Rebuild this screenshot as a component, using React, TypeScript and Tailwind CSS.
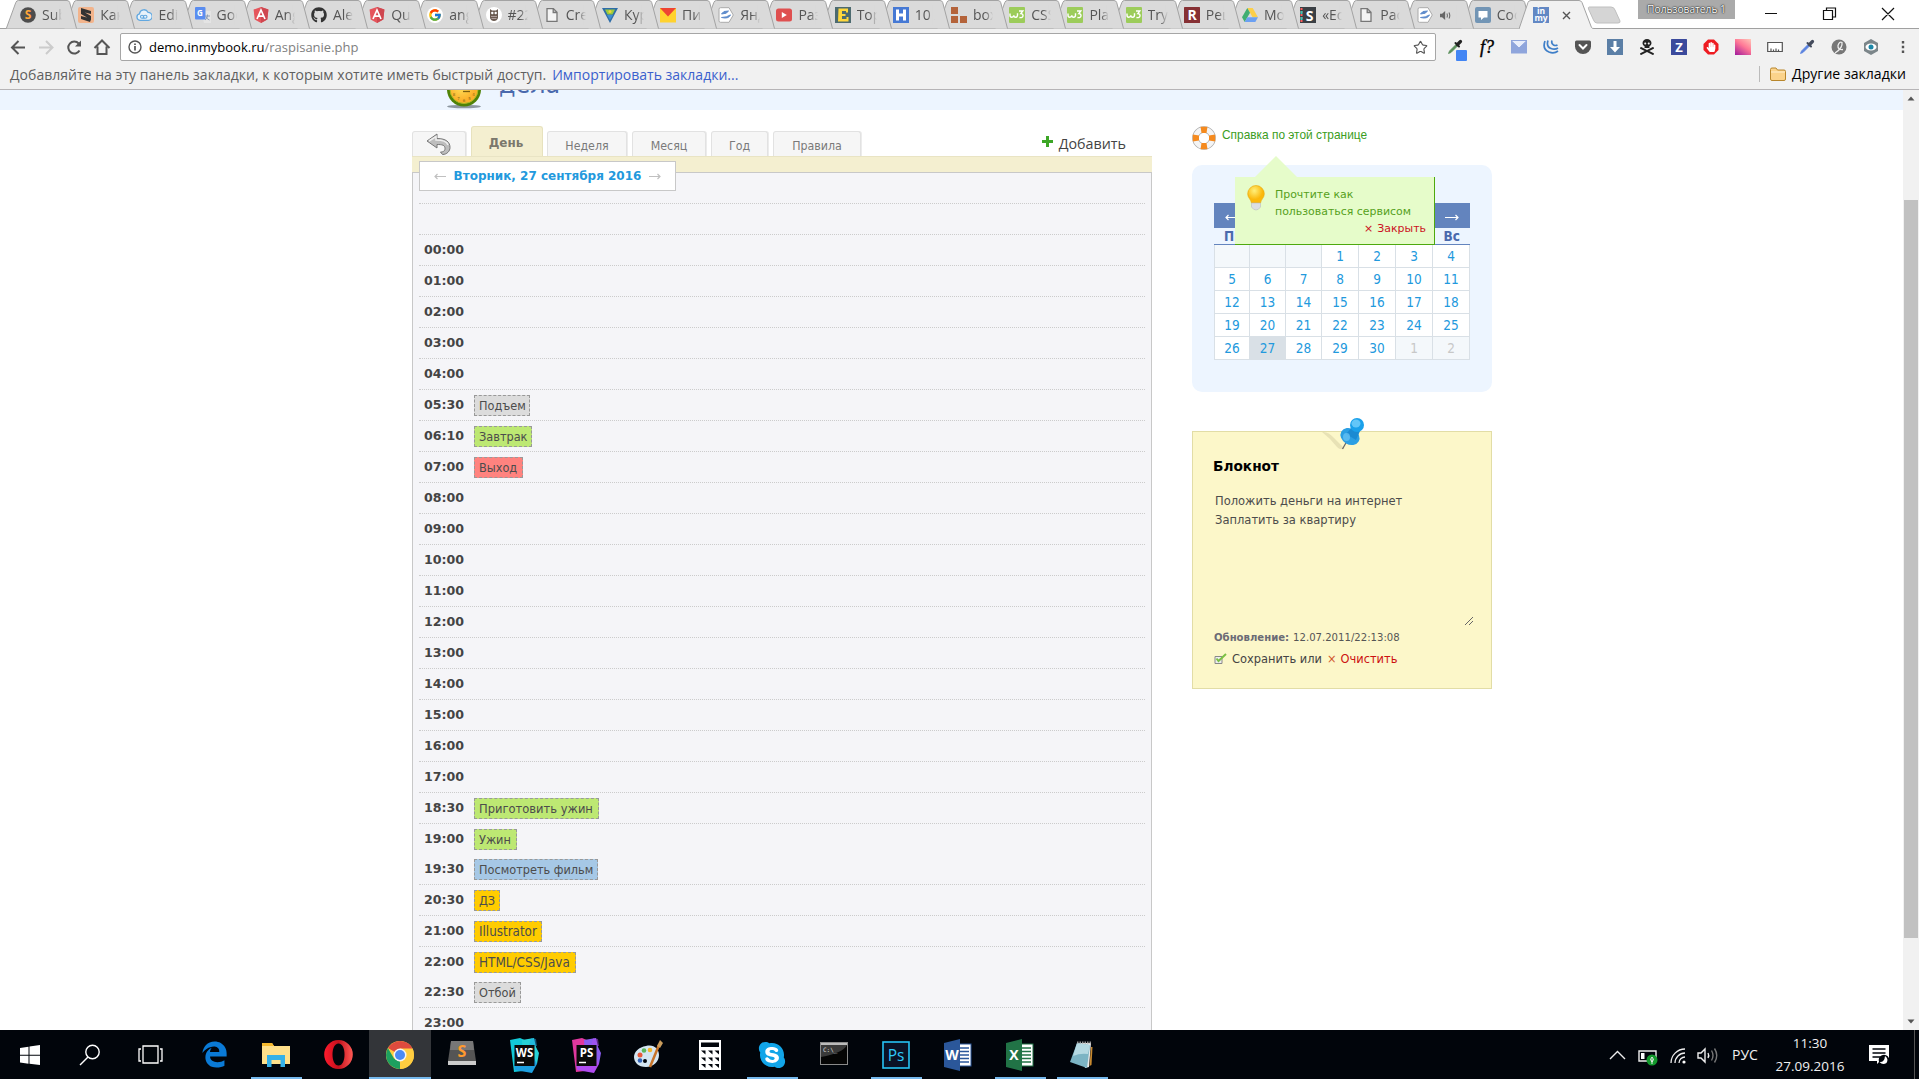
import React from "react";
import { FaGithub, FaSkype, FaHandPaper, FaSkullCrossbones } from "react-icons/fa";
import { FcGoogle } from "react-icons/fc";
import { Star } from "lucide-react";

type Kids = { children?: React.ReactNode };

const Ico = ({ children, s = 16, v = 16 }: Kids & { s?: number; v?: number }) => (
  <svg width={s} height={s} viewBox={`0 0 ${v} ${v}`} className="block shrink-0">
    {children}
  </svg>
);

const SqIcon = ({ bg, fg, t, size = 13 }: { bg: string; fg: string; t: string; size?: number }) => (
  <Ico>
    <rect width="16" height="16" fill={bg} rx="0.5" />
    <text x="8" y={8 + size * 0.36} textAnchor="middle" fontSize={size} fontWeight="bold" fill={fg} fontFamily="Open Sans, sans-serif">
      {t}
    </text>
  </Ico>
);

const Angular = () => (
  <Ico>
    <path d="M8 0l7.4 2.6-1.1 10L8 16l-6.3-3.4-1.1-10z" fill="#e5555c" />
    <path d="M8 0l7.4 2.6-1.1 10L8 16z" fill="#cf4750" />
    <path d="M4 12L8 3l4 9M5.6 9.2h4.8" stroke="#fff" strokeWidth="1.7" fill="none" />
  </Ico>
);
const PageIcon = () => (
  <Ico>
    <path d="M3 1.6h6.4L13 5.2v9.2H3zM9.2 1.8v3.7h3.6" fill="#f4f4f4" stroke="#777" strokeWidth="1.3" />
  </Ico>
);
const W3 = () => (
  <Ico>
    <rect width="16" height="16" rx="1" fill="#9ccc5a" />
    <path d="M1 6.5v1.8q0 2 1.8 2t2-2q0 2 1.8 2t1.9-2V6.3" stroke="#fff" strokeWidth="1.4" fill="none" />
    <path d="M10 4h3.8l-2 2.6q2.4.2 2.2 2.2-.4 2.4-3.6 1.7" stroke="#fff" strokeWidth="1.4" fill="none" />
  </Ico>
);
const YandexDoc = () => (
  <Ico>
    <path d="M1 2.2Q1 .7 2.5.7H11l4.3 7.3L11 15.3H2.5Q1 15.3 1 13.8z" fill="#fff" stroke="#aaa" />
    <path d="M3.5 7q1.500-3.500 7-3-1.500 3-7 3zM3.500 10.500q5 0 9-2.600-2 4.400-9 2.600z" fill="#5f8ccc" stroke="#5f8ccc" />
  </Ico>
);

const TABS: { icon: React.ReactNode; label: React.ReactNode }[] = [
  {
    label: "Subl",
    icon: (
      <Ico>
        <circle cx="8" cy="8" r="7.8" fill="#4d4d4d" />
        <text x="8" y="12.4" textAnchor="middle" fontSize="12" fontWeight="bold" fill="#ffa63a" fontFamily="Open Sans">S</text>
      </Ico>
    ),
  },
  {
    label: "Как",
    icon: (
      <Ico>
        <rect width="16" height="16" rx="2" fill="#f2b48c" />
        <path d="M3 1l10 3v3l-6-1.500L13 9v3.500L12 15 3 12V9l6 1.500L3 7z" fill="#333" />
      </Ico>
    ),
  },
  {
    label: "Edit",
    icon: (
      <Ico>
        <path d="M4 13.300a3.300 3.300 0 01-.5-6.500 4.500 4.500 0 018.500-1.500 4 4 0 01.3 8z" fill="#e8f2fa" stroke="#62a8e0" strokeWidth="1.300" />
        <path d="M4.500 9.700a1.500 1.500 0 003 0c0-2 3.500-2 3.500 0s-3.500 2-3.500 0-3-2-3 0" fill="none" stroke="#62a8e0" strokeWidth="1.100" />
      </Ico>
    ),
  },
  {
    label: "Goog",
    icon: (
      <Ico>
        <path d="M6 4h10v12H9z" fill="#e4e4e4" />
        <rect width="10.500" height="12.500" rx="1" fill="#5a8df0" />
        <text x="4.800" y="9" textAnchor="middle" fontSize="8" fontWeight="bold" fill="#fff" fontFamily="Open Sans">G</text>
        <path d="M10 9h5M12.500 7.500V9q-.5 3-2.500 4M11 9.500q1 3 3.500 3.500" stroke="#8d9db8" fill="none" />
      </Ico>
    ),
  },
  { label: "Angu", icon: <Angular /> },
  { label: "Alek", icon: <FaGithub size={16} color="#333" /> },
  { label: "Quic", icon: <Angular /> },
  {
    label: "angu",
    icon: (
      <span className="flex h-4 w-4 items-center justify-center rounded-full bg-white">
        <FcGoogle size={14} />
      </span>
    ),
  },
  {
    label: "#22",
    icon: (
      <Ico>
        <circle cx="8" cy="8" r="8" fill="#fff" />
        <path d="M4 2l2 1.500h4L12 2v9q-1 3-4 3t-4-3z" fill="#6b5b50" />
        <circle cx="6.300" cy="6" r="1.200" fill="#fff" />
        <circle cx="9.700" cy="6" r="1.200" fill="#fff" />
        <path d="M5 9.500h6M5.500 11.500h5" stroke="#cbb" strokeWidth=".7" />
      </Ico>
    ),
  },
  { label: "Crea", icon: <PageIcon /> },
  {
    label: "Курс",
    icon: (
      <Ico>
        <path d="M0 1h16L8 16z" fill="#2e6da8" />
        <path d="M3 2.500h10l-2.500 5h-5z" fill="#9bcb3c" />
        <path d="M5 8h6L8 13z" fill="#3f8fd0" />
        <circle cx="8" cy="4.500" r="1.500" fill="#f3d33c" />
      </Ico>
    ),
  },
  {
    label: "Пис",
    icon: (
      <Ico>
        <rect y="1" width="16" height="14.500" fill="#ffd22e" />
        <path d="M0 1h16L8 9.500z" fill="#ee4433" />
      </Ico>
    ),
  },
  { label: "Янд", icon: <YandexDoc /> },
  {
    label: "Раз",
    icon: (
      <Ico>
        <rect y="1.500" width="16" height="13" rx="2.500" fill="#df5050" />
        <path d="M5.800 5v6l5-3z" fill="#fff" />
      </Ico>
    ),
  },
  {
    label: "Top",
    icon: (
      <Ico>
        <rect width="16" height="16" fill="#4d6b70" />
        <path d="M3.500 1.500h9.500v4h-2v-1.500H7V7h3.500v2H7v3h4.500v-2h2v4.500H3z" fill="#ffd83c" />
      </Ico>
    ),
  },
  {
    label: "10 л",
    icon: (
      <Ico>
        <rect width="16" height="16" fill="#4679d4" />
        <path d="M4.500 2.500v11M11.500 2.500v11M4.500 8h7" stroke="#fff" strokeWidth="3" />
      </Ico>
    ),
  },
  {
    label: "box",
    icon: (
      <Ico>
        <path d="M0 0h7v7H0zM0 9h7v7H0zM9 9h7v7H9z" fill="#b4633a" />
      </Ico>
    ),
  },
  { label: "CSS", icon: <W3 /> },
  { label: "Play", icon: <W3 /> },
  { label: "Try", icon: <W3 /> },
  { label: "Рец", icon: <SqIcon bg="#863034" fg="#fff" t="R" size={14} /> },
  {
    label: "Мой",
    icon: (
      <Ico>
        <path d="M5.300 1h5.400L16 10.300h-5.400z" fill="#fccf4a" />
        <path d="M5.300 1L8 5.700 2.700 15 0 10.300z" fill="#3fae72" />
        <path d="M5.300 10.300H16L13.300 15H2.700z" fill="#6ba0f2" />
      </Ico>
    ),
  },
  {
    label: "«Ес",
    icon: (
      <Ico>
        <rect width="16" height="16" fill="#3a3f44" />
        <path d="M1.500 1v14" stroke="#ff5c5c" strokeWidth="2" strokeDasharray="2 1" />
        <path d="M1.500 4v3M1.500 10v3" stroke="#36c8b8" strokeWidth="2" />
        <text x="9.700" y="13.500" textAnchor="middle" fontSize="14" fontWeight="bold" fill="#fff" fontFamily="Open Sans">S</text>
      </Ico>
    ),
  },
  { label: "Рас", icon: <PageIcon /> },
  {
    label: (
      <span className="flex h-full items-center pl-[1px]">
        <Ico s={11} v={16}>
          <path d="M0 5.500h3L7.500 1.500v13L3 10.500H0z" fill="#666" />
          <path d="M10 5q1.500 3 0 6M13 3.500q2.500 4.500 0 9" stroke="#666" strokeWidth="1.500" fill="none" />
        </Ico>
      </span>
    ),
    icon: <YandexDoc />,
  },
  {
    label: "Соо",
    icon: (
      <Ico>
        <rect width="16" height="16" rx="2" fill="#7295b5" />
        <path d="M3.500 4h9v6.500H9L6 13v-2.500H3.500z" fill="#fff" />
      </Ico>
    ),
  },
];

const TabStrip = () => (
  <div className="relative flex h-[29px] bg-white">
    <div className="absolute inset-x-0 bottom-0 h-px bg-[#a0a0a0]" />
    <div className="flex pl-[6px]">
      {TABS.map((t, i) => (
        <div key={i} className="relative h-[29px] w-[58.19px] shrink-0" style={{ zIndex: 30 - i }}>
          <svg width="72" height="29" viewBox="0 0 72 29" className="absolute top-0 left-0">
            <path d="M.3 28.500L9.800 2.500Q10.500.5 12.500.5H61Q63 .5 63.700 2.500L71 24.500Q71.500 27 70 28.500z" fill="#dadada" />
            <path d="M.3 28.500L9.800 2.500Q10.500.5 12.500.5H61Q63 .5 63.700 2.500L70.500 28.500" fill="none" stroke="#a3a3a3" />
          </svg>
          <div className="relative flex h-full items-center pt-px pl-[14px]">
            {t.icon}
            <span className="ml-[6px] h-[20px] w-[20px] shrink-0 overflow-hidden bg-[#dadada] text-[14px] leading-[19px] whitespace-nowrap text-[#555] [mask-image:linear-gradient(to_right,black_60%,transparent)]">
              {t.label}
            </span>
          </div>
        </div>
      ))}
      <div className="relative z-40 h-[29px] w-[72px] shrink-0">
        <svg width="76" height="29" viewBox="0 0 76 29" className="absolute top-0 left-0">
          <path d="M0 29L9 2.500Q9.600.5 12 .5H60Q62 .5 63 2.500L72.500 27.500Q73 28.500 75 28.500V29z" fill="#f1f1f1" />
          <path d="M0 29L9 2.500Q9.600.5 12 .5H60Q62 .5 63 2.500L72.500 27.500Q73 28.500 75 28.500" fill="none" stroke="#a3a3a3" />
        </svg>
        <div className="relative flex h-full items-center pt-px pl-[14px]">
          <Ico>
            <rect width="16" height="16" fill="#6288c4" />
            <text x="8" y="7" textAnchor="middle" fontSize="8.500" fontWeight="bold" fill="#fff" fontFamily="Open Sans">in</text>
            <text x="8" y="13.500" textAnchor="middle" fontSize="8.500" fontWeight="bold" fill="#fff" fontFamily="Open Sans">my</text>
          </Ico>
          <svg width="9" height="9" className="ml-[13px]"><path d="M1 1l7 7M8 1L1 8" stroke="#555" strokeWidth="1.400" /></svg>
        </div>
      </div>
    </div>
    <svg width="36" height="18" className="mt-[6px] -ml-[4px] block">
      <path d="M2 1h22q3 0 4 3l5 11q.5 2-2 2H10q-2.500 0-3.500-3L1.500 3Q1 1 2 1z" fill="#d5d5d5" stroke="#bfbfbf" />
    </svg>
    <div className="mt-0 ml-auto h-[19px] w-[97px] bg-[#aaa] text-center text-[10.200px] leading-[18px] text-white [text-shadow:0_0_2px_#000,0_0_1px_#000]">
      Пользователь 1
    </div>
    <div className="flex h-[29px] w-[184px] items-start">
      <svg width="184" height="29" fill="none" stroke="#111" strokeWidth="1.200">
        <path d="M30 13.500h12M88.500 10.500h9v9h-9zM91.500 10.500v-2.500h9v9h-3M147 8l12 12M159 8l-12 12" />
      </svg>
    </div>
  </div>
);

const Dropper = ({ a, b }: { a: string; b: string }) => (
  <Ico>
    <path d="M1.500 14.500l1-2.500L9 5.500l1.500 1.500L4 13.500z" fill={b} stroke={b} strokeWidth=".8" />
    <path d="M8.500 4l3.500 3.500" stroke={a} strokeWidth="2" strokeLinecap="round" />
    <path d="M10.500 5.500L13.500 2.500" stroke={a} strokeWidth="3.200" strokeLinecap="round" />
  </Ico>
);

const EXT: React.ReactNode[] = [
  <span key="0" className="relative">
    <Dropper a="#222" b="#5b8f5b" />
    <span className="absolute top-[11px] left-[9px] h-[11px] w-[11px] rounded-[1px] bg-[#4285f4]" />
  </span>,
  <span key="1" className="font-['Liberation_Serif'] text-[18px] leading-4 text-black italic [-webkit-text-stroke:0.4px_#000]">f?</span>,
  <Ico key="2"><rect y="1.500" width="16" height="13" fill="#8fa5dc" /><path d="M0 1.500h16L8 9z" fill="#e8edfa" stroke="#8fa5dc" /></Ico>,
  <Ico key="3"><g fill="none" stroke="#3f7fc8" strokeWidth="1.700"><path d="M2 2q-3 8 4 11 5 2 9-1M5 1.500q-2 6 3 8 4 1.500 7-.5M9 1.500q-1 3 1.500 4.500 2 1 4 0" /></g></Ico>,
  <Ico key="4"><path d="M1.500 1.500h13Q16 1.500 16 3v4.500a8 7.500 0 01-16 0V3Q0 1.500 1.500 1.500z" fill="#555" /><path d="M4.500 6L8 9.500 11.500 6" stroke="#fff" strokeWidth="2" fill="none" strokeLinecap="round" /></Ico>,
  <Ico key="5"><rect width="16" height="16" fill="#5b7fa6" /><path d="M6.500 2h3v6H13l-5 5.500L3 8h3.500z" fill="#fff" /></Ico>,
  <FaSkullCrossbones key="6" size={16} color="#222" />,
  <SqIcon key="7" bg="#3b4a9c" fg="#fff" t="Z" size={13} />,
  <span key="8" className="relative flex h-4 w-4 items-center justify-center">
    <svg width="16" height="16" className="absolute inset-0"><path d="M5 .5h6L15.500 5v6L11 15.500H5L.5 11V5z" fill="#ee1c22" /></svg>
    <FaHandPaper size={10} color="#fff" className="relative" />
  </span>,
  <span key="9" className="h-4 w-4 bg-[linear-gradient(35deg,#a0189c,#ff7896_55%,#ffc8b8)]" />,
  <Ico key="10"><path d="M.7 3.500h14.600v9H.7zM4 12V9.500M6.500 12v-1.500M9 12V9.500M11.500 12v-1.500" stroke="#555" strokeWidth="1.200" fill="#fff" /></Ico>,
  <Dropper key="11" a="#444b5c" b="#5b83e0" />,
  <Ico key="12"><circle cx="8" cy="8" r="7.500" fill="#777" /><path d="M4 14Q12 9 11 3.500 8.500 2 7 6.500 6.500 11 12 10.500" stroke="#eee" strokeWidth="1.300" fill="none" /></Ico>,
  <Ico key="13"><path d="M8 0l7 4v8l-7 4-7-4V4z" fill="#7c868a" /><ellipse cx="8" cy="8" rx="5.500" ry="3.500" fill="#fff" /><circle cx="8" cy="8" r="2.500" fill="#1b87a8" /></Ico>,
  <Ico key="14"><path d="M6.800 2h2.400v2.400H6.800zM6.800 6.800h2.400v2.400H6.800zM6.800 11.600h2.400V14H6.800z" fill="#555" /></Ico>,
];

const Toolbar = () => (
  <div className="flex h-[33px] items-center bg-[#f1f1f1] pt-[3px]">
    <svg width="120" height="28" className="shrink-0" fill="none" strokeWidth="2">
      <path d="M25 14.500H12.500M18.500 8L12 14.500l6.500 6.500" stroke="#555" />
      <path d="M39 14.500h12.500M46 8l6.500 6.500-6.500 6.500" stroke="#ccc" />
      <path d="M79.500 17.500a6 6 0 11-.8-7" stroke="#555" />
      <path d="M81 7.500v6h-6z" fill="#555" />
      <path d="M94.500 15L102 7.500l7.500 7.500M97.500 13.500v7.500h9V13.500" stroke="#555" />
    </svg>
    <div className="flex h-[28px] w-[1316px] shrink-0 items-center rounded-[2px] border border-[#a6a6a6] bg-white pl-[7px]">
      <svg width="14" height="14" fill="none" stroke="#555" strokeWidth="1.400">
        <circle cx="7" cy="7" r="6" />
        <path d="M7 6v4.500M7 3.500V5" strokeWidth="1.700" />
      </svg>
      <span className="ml-[7px] pt-px text-[13px] text-black">
        demo.inmybook.ru<span className="text-[#808080]">/raspisanie.php</span>
      </span>
      <Star size={15} strokeWidth={1.800} color="#555" className="mr-[7px] ml-auto" />
    </div>
    <div className="flex pl-[3px]">
      {EXT.map((e, i) => (
        <span key={i} className="flex h-5 w-8 items-center justify-center">{e}</span>
      ))}
    </div>
  </div>
);

const Bookmarks = () => (
  <div className="flex h-[28px] items-center border-b border-[#b6b4b6] bg-[#f1f1f1] pb-[3px] pl-[10px] text-[14px] text-[#5f5f5f]">
    <span className="tracking-[0.025px]">Добавляйте на эту панель закладки, к которым хотите иметь быстрый доступ.</span>
    <span className="ml-[6px] text-[#3a5fcd]">Импортировать закладки...</span>
    <span className="ml-auto h-4 w-px bg-[#bbb]" />
    <svg width="16" height="14" className="mr-[6px] ml-[10px]">
      <path d="M.5 12V2.500Q.5 1 2 1h4l1.500 2H14q1.500 0 1.500 1.500V12q0 1.500-1.500 1.500H2Q.5 13.500.5 12z" fill="#fbd38b" stroke="#b8862c" />
      <path d="M1 5h14" stroke="#fff0cf" />
    </svg>
    <span className="mr-[13px] text-[14.080px] text-black">Другие закладки</span>
  </div>
);

const SiteHeader = () => (
  <div className="h-[20px] overflow-hidden bg-[#edf5ff] pl-[446px]">
    <div className="-mt-[20px] flex">
      <svg width="36" height="40" viewBox="0 0 36 40">
        <defs>
          <radialGradient id="clk" cx=".4" cy=".4"><stop offset="0" stopColor="#ffe25a" /><stop offset="1" stopColor="#fbb02a" /></radialGradient>
        </defs>
        <ellipse cx="18" cy="36.500" rx="17" ry="1.800" fill="#8d97a0" />
        <circle cx="18" cy="19.500" r="17" fill="#4f8207" />
        <circle cx="18" cy="19.500" r="14" fill="url(#clk)" stroke="#a9b920" strokeWidth="1" />
        <g fontSize="4" fill="#8a6c14" textAnchor="middle" fontFamily="DejaVu Sans">
          <text x="8" y="26">8</text><text x="12.500" y="29.500">7</text><text x="18" y="31.500">6</text><text x="23.500" y="29.500">5</text><text x="27.500" y="26">4</text>
        </g>
        <path d="M17 21.500h7" stroke="#7a5f10" strokeWidth="1.300" />
      </svg>
      <span className="ml-[17px] pt-px font-['DejaVu_Sans_Condensed'] text-[26.500px] leading-[26px] text-[#4a69ad]">дела</span>
    </div>
  </div>
);

const ViewTab = ({ w, children }: Kids & { w: string }) => (
  <div className={`${w} flex h-[25px] items-center justify-center rounded-t-[3px] border border-b-0 border-[#e2e2e2] bg-[#f6f6f6] pt-[4px] text-[12.300px] text-[#7a7a7a] shadow-[1px_0_0_#ececec]`}>
    {children}
  </div>
);

const LongArrow = ({ dir, w = 12, color }: { dir: "l" | "r"; w?: number; color: string }) => (
  <svg width={w} height="7" viewBox={`0 0 ${w} 7`} fill="none" stroke={color} strokeWidth="1.200" className="shrink-0">
    <path d={dir === "l" ? `M${w} 3.500H1M3.500 1L1 3.500L3.500 6` : `M0 3.500H${w - 1}M${w - 3.5} 1L${w - 1} 3.500L${w - 3.5} 6`} />
  </svg>
);

const GREY = "bg-[#dcdcdc]", GREEN = "bg-[#bde873]", RED = "bg-[#ff837f]", BLUE = "bg-[#a6c8e6]", YEL = "bg-[#ffcc00]";
type Item = [string, string?, string?, string?];
const ROWS: Item[][] = [
  [["00:00"]], [["01:00"]], [["02:00"]], [["03:00"]], [["04:00"]],
  [["05:30", "Подъем", GREY, "w-[56px] text-[12.600px]"]],
  [["06:10", "Завтрак", GREEN, "w-[58px] text-[12.600px]"]],
  [["07:00", "Выход", RED, "w-[49px] text-[12.600px]"]],
  [["08:00"]], [["09:00"]], [["10:00"]], [["11:00"]], [["12:00"]], [["13:00"]], [["14:00"]], [["15:00"]], [["16:00"]], [["17:00"]],
  [["18:30", "Приготовить ужин", GREEN, "w-[125px] text-[12.800px]"]],
  [["19:00", "Ужин", GREEN, "w-[43px] text-[12.600px]"], ["19:30", "Посмотреть фильм", BLUE, "w-[124px] text-[12.600px]"]],
  [["20:30", "ДЗ", YEL, "w-[26px] text-[12.600px]"]],
  [["21:00", "Illustrator", YEL, "w-[68px] text-[13.300px]"]],
  [["22:00", "HTML/CSS/Java", YEL, "w-[102px] text-[13.400px]"], ["22:30", "Отбой", GREY, "w-[47px] text-[12.600px]"]],
  [["23:00"]],
];

const Schedule = () => (
  <div className="ml-[412px] w-[740px] shrink-0 pt-[16px] font-['DejaVu_Sans_Condensed']">
    <div className="flex h-[30px] items-end">
      <ViewTab w="w-[54px]">
        <svg width="26" height="23" viewBox="0 0 26 23" className="-mt-[3px]">
          <path d="M1 8L11 1v4.500c9 0 13 3.500 13 9 0 3.500-3 7-7.500 7l-2-2.500c3.500 0 4.500-1.500 4.500-3.500 0-3.500-3-4-8-4V15z" fill="#bdbdbd" stroke="#777" />
          <path d="M3 8l7-4.500V7c7 0 11 1.500 12 5" fill="none" stroke="#eee" strokeWidth="1.500" />
        </svg>
      </ViewTab>
      <div className="mr-[4px] ml-[5px] flex h-[30px] w-[72px] items-center justify-center rounded-t-[3px] border border-b-0 border-[#e7e2be] bg-[#f4efd0] pt-[2px] pr-[2px] font-['DejaVu_Sans'] text-[12px] font-bold text-[#7b786c]">День</div>
      <ViewTab w="w-[80px]">Неделя</ViewTab>
      <span className="w-[5px]" />
      <ViewTab w="w-[74px]">Месяц</ViewTab>
      <span className="w-[5px]" />
      <ViewTab w="w-[57px]">Год</ViewTab>
      <span className="w-[5px]" />
      <ViewTab w="w-[88px]">Правила</ViewTab>
      <div className="mb-[2px] ml-auto flex items-center font-['Open_Sans'] text-[14.300px] leading-[20px] text-[#444]">
        <svg width="11" height="11" className="mr-[6px] -mt-[5px]"><path d="M4 0h3v4h4v3H7v4H4V7H0V4h4z" fill="#3ca626" /></svg>
        <span className="mr-[26px]">Добавить</span>
      </div>
    </div>
    <div className="h-[16px] border-t border-[#e9e4c4] bg-[#f4efd0]" />
    <div className="relative border border-b-0 border-[#c8c8c8] bg-[#f5f5f8] px-[6px]">
      <div className="absolute -top-[12px] left-[6px] flex h-[30px] w-[257px] items-center justify-center gap-[8px] border border-[#c8c8c8] bg-white font-['DejaVu_Sans'] text-[12px] font-bold whitespace-nowrap text-[#2299dd]">
        <LongArrow dir="l" color="#c0c0c0" />
        <span>Вторник, 27 сентября 2016</span>
        <LongArrow dir="r" color="#c0c0c0" />
      </div>
      <div className="h-[31px] border-b border-dotted border-[#ccc]" />
      <div className="h-[31px] border-b border-dotted border-[#ccc]" />
      {ROWS.map((row, i) => (
        <div key={i} className="border-b border-dotted border-[#ccc]">
          {row.map(([time, title, color, w]) => (
            <div key={time} className="flex h-[30px] pl-[5px]">
              <span className="mt-[5px] w-[50px] font-['DejaVu_Sans'] text-[12.600px] leading-[19px] font-bold text-[#444]">{time}</span>
              {title && (
                <span className={`${color} ${w} mt-[5px] h-[21px] border border-dashed border-[#999] pl-[4px] leading-[19px] whitespace-nowrap text-[#4c4c4c]`}>
                  {title}
                </span>
              )}
            </div>
          ))}
        </div>
      ))}
    </div>
  </div>
);

const WEEKS = [
  ["", "", "", "1", "2", "3", "4"],
  ["5", "6", "7", "8", "9", "10", "11"],
  ["12", "13", "14", "15", "16", "17", "18"],
  ["19", "20", "21", "22", "23", "24", "25"],
  ["26", "27", "28", "29", "30", "-1", "-2"],
];
const COLS = "grid grid-cols-[35px_36px_36px_37px_37px_37px_37px]";

const Calendar = () => (
  <div className="relative mt-[15px] h-[227px] rounded-[10px] bg-[#edf5ff] pt-[38px] pl-[22px] text-[13.500px]">
    <div className="w-[256px]">
      <div className="flex h-[25px] items-center justify-between bg-[#6384be] px-[11px] pt-[3px]">
        <LongArrow dir="l" w={14} color="#fff" />
        <LongArrow dir="r" w={14} color="#fff" />
      </div>
      <div className="flex h-[17px] justify-between border-b border-[#6384be] px-[10px] leading-[17px] font-bold text-[#4a69ad]">
        <span>Пн</span>
        <span>Вс</span>
      </div>
      <div className={`${COLS} border-l border-[#d9e0e6]`}>
        {WEEKS.flat().map((d, i) => {
          const off = d === "" || d[0] === "-";
          return (
            <span
              key={i}
              className={`h-[23px] border-r border-b border-[#d9e0e6] text-center leading-[22px] ${off ? "bg-[#f4f8fb] text-[#c8c8c8]" : d === "27" ? "bg-[#d9e0e6] text-[#2299dd]" : "bg-white text-[#2299dd]"}`}
            >
              {d.replace("-", "")}
            </span>
          );
        })}
      </div>
    </div>
    <div className="absolute top-[12px] left-[43px] flex h-[68px] w-[200px] border-r border-b border-[#4ea90e] bg-[#e6fcca] font-['DejaVu_Sans'] text-[10.940px] leading-[17px] text-[#55a020]">
      <svg width="44" height="22" className="absolute -top-[21px] left-[19px]"><path d="M22 0l22 22H0z" fill="#e6fcca" /></svg>
      <svg width="18" height="26" viewBox="0 0 18 26" className="mt-[8px] ml-[12px] shrink-0">
        <defs><radialGradient id="blb" cx=".4" cy=".3"><stop offset="0" stopColor="#fff07a" /><stop offset="1" stopColor="#fbb80c" /></radialGradient></defs>
        <path d="M9 .5a8.300 8.300 0 018.300 8.300c0 4-3.300 5.700-3.800 9.200h-9C4 14.500.7 12.800.7 8.800A8.300 8.300 0 019 .5z" fill="url(#blb)" stroke="#e8a80c" strokeWidth=".6" />
        <path d="M4.500 18h9v4q-2 3-4.500 3t-4.500-3z" fill="#dcdfe2" stroke="#b8bcc0" strokeWidth=".6" />
      </svg>
      <div className="mt-[9px] ml-[10px] flex-1 whitespace-nowrap">
        <div>Прочтите как</div>
        <div>пользоваться сервисом</div>
        <div className="pr-[8px] text-right text-[#cc1122]"><span className="mr-[4px]">×</span>Закрыть</div>
      </div>
    </div>
  </div>
);

const Notebook = () => (
  <div className="relative mt-[39px] h-[258px] border border-[#e2dda6] bg-[#fcf7c9] pt-[24px] pl-[20px] text-[#4c4c4c]">
    <svg width="46" height="38" viewBox="0 0 46 38" className="absolute -top-[16px] left-[127px]">
      <path d="M2 16q6-1 12 6l10 10q-3 3-7-1Q10 22 2 16z" fill="#e2dcb0" opacity=".8" />
      <path d="M22.500 33l4.500-8" stroke="#666" strokeWidth="1.300" />
      <ellipse cx="30" cy="20.500" rx="10" ry="8" transform="rotate(30 30 20.500)" fill="#2b9fe3" />
      <path d="M26 18l7-8 7 5-4 9z" fill="#1b8ad2" />
      <circle cx="37" cy="9" r="7" fill="#1aa0ea" />
      <ellipse cx="36" cy="7.500" rx="4.500" ry="4" fill="#63c6f8" />
      <ellipse cx="26.500" cy="21" rx="3.500" ry="4" fill="#6cc6f5" opacity=".7" />
    </svg>
    <div className="font-['DejaVu_Sans'] text-[13.700px] leading-[20px] font-bold text-black">Блокнот</div>
    <div className="relative mt-[15px] ml-[2px] h-[134px] w-[258px] text-[12.800px] leading-[19px]">
      Положить деньги на интернет
      <br />
      Заплатить за квартиру
      <svg width="8" height="8" className="absolute right-0 bottom-0"><path d="M0 8L8 0M4 8l4-4" stroke="#666" /></svg>
    </div>
    <div className="mt-[6px] ml-px font-['DejaVu_Sans'] text-[10.100px] leading-[14px] text-[#555]">
      <b className="text-[#6b6b75]">Обновление:</b><span className="ml-[4px]">12.07.2011/22:13:08</span>
    </div>
    <div className="mt-[4px] ml-px flex h-[20px] items-center text-[12.700px] text-[#444]">
      <svg width="13" height="12" className="mr-[5px] -mt-[1px]">
        <path d="M1 3.500h7v7H1z" fill="#eee" stroke="#888" />
        <path d="M2.500 5.500l2 2.500L12 1" stroke="#7bc043" strokeWidth="2" fill="none" />
      </svg>
      Сохранить или
      <span className="mr-[4px] ml-[5px] text-[#d0552c]">×</span>
      <span className="text-[#cc1111]">Очистить</span>
    </div>
  </div>
);

const Sidebar = () => (
  <div className="ml-[40px] w-[300px] shrink-0 pt-[16px] font-['DejaVu_Sans_Condensed']">
    <div className="flex h-[24px]">
      <svg width="24" height="24" viewBox="0 0 24 24">
        <circle cx="12" cy="12" r="8.500" fill="none" stroke="#aaa" strokeWidth="6.600" />
        <circle cx="12" cy="12" r="8.500" fill="none" stroke="#f4f4f4" strokeWidth="5.200" />
        <g fill="#f58a1e">
          <path d="M8.500 .8h7l-1 6.200h-5zM8.500 23.200h7l-1-6.200h-5zM.8 8.500v7l6.200-1v-5zM23.200 8.500v7l-6.200-1v-5z" />
        </g>
      </svg>
      <span className="ml-[6px] pt-[1px] font-['Liberation_Sans'] text-[11.900px] leading-[16px] text-[#3a9d22]">Справка по этой странице</span>
    </div>
    <Calendar />
    <Notebook />
  </div>
);

const Scrollbar = () => (
  <div className="ml-auto flex w-4 shrink-0 flex-col items-center bg-[#f1f1f1]">
    <svg width="16" height="16" className="shrink-0"><path d="M4.500 10.500h7L8 6.500z" fill="#555" /></svg>
    <div className="mt-[94px] h-[738px] w-[14px] bg-[#c1c1c1]" />
    <svg width="16" height="16" className="mt-auto shrink-0"><path d="M4.500 5.500h7L8 9.500z" fill="#555" /></svg>
  </div>
);

const JB = ({ t, a, b, c }: { t: string; a: string; b: string; c: string }) => (
  <svg width="31" height="36" viewBox="0 0 31 36">
    <path d="M1 3l10-2 7 3-4 30-9 1z" fill={a} />
    <path d="M13 3l12-2 2 9 3 6-2 11-14-4z" fill={b} />
    <path d="M5 27l19-8 4 8-5 9-17-3z" fill={c} />
    <path d="M22 1l5 1 1 7h-8z" fill={c} opacity=".5" />
    <rect x="5.500" y="8" width="20" height="21" fill="#0a0a0a" />
    <text x="15.500" y="20" textAnchor="middle" fontSize="11.500" fontWeight="bold" fill="#fff" fontFamily="Open Sans">{t}</text>
    <path d="M8 25.500h7" stroke="#fff" strokeWidth="1.500" />
  </svg>
);
const Office = ({ t, c }: { t: string; c: string }) => (
  <svg width="28" height="32" viewBox="0 0 28 32">
    <rect x="13" y="5" width="14" height="22" fill="#fff" stroke={c} />
    <path d="M16 9h9M16 12.500h9M16 16h9M16 19.500h9M16 23h9" stroke={c} strokeWidth="1.600" />
    <path d="M0 4L16 0v32L0 28z" fill={c} />
    <text x="8" y="21" textAnchor="middle" fontSize="14" fontWeight="bold" fill="#fff" fontFamily="Open Sans">{t}</text>
  </svg>
);

const APPS: [React.ReactNode, ("line" | "active")?][] = [
  [<svg width="27" height="27" viewBox="0 0 512 512"><path d="M25.714 228.163c.111-.162.23-.323.342-.485-.021.162-.045.323-.065.485h-.277zm460.572 15.508c0-44.032-7.754-84.465-28.801-122.405C416.498 47.879 343.912 8.001 258.893 8.001 118.962 7.724 40.617 113.214 26.056 227.679c42.429-61.312 117.073-121.376 220.375-124.966 0 0 109.666 0 99.419 104.957H169.997c6.369-37.386 18.554-58.986 34.339-78.926-75.048 34.900-121.850 96.096-120.742 188.315.83 71.448 50.124 144.836 120.743 171.976 83.357 31.847 192.776 7.200 240.132-21.321V363.307c-80.864 56.494-270.871 60.925-272.255-67.572h314.073v-52.064z" fill="#0a7ad6" /></svg>],
  [<svg width="28" height="28" viewBox="0 0 28 28"><path d="M0 2h10l2 3h16v18H0z" fill="#ffe08a" /><path d="M0 2h10l2 3H0z" fill="#f5b92e" /><path d="M5 14h18v12h-4.500v-7h-9v7H5z" fill="#35b1e8" /></svg>, "line"],
  [<svg width="29" height="29" viewBox="0 0 29 29"><defs><linearGradient id="op"><stop offset="0" stopColor="#ff1b2d" /><stop offset=".5" stopColor="#c4101c" /><stop offset="1" stopColor="#ff5a55" /></linearGradient></defs><path fillRule="evenodd" d="M14.500 0a14.300 14.500 0 100 29 14.300 14.500 0 000-29zm0 3.500c4 0 6 5 6 11s-2 11-6 11-6-5-6-11 2-11 6-11z" fill="url(#op)" /></svg>],
  [<svg width="28" height="28" viewBox="0 0 28 28"><circle cx="14" cy="14" r="14" fill="#ffcd40" /><path d="M14 14L1.900 7A14 14 0 0126.100 7z" fill="#dd4b3e" /><path d="M14 14v-7h12.100A14 14 0 0114 28l6-10.500z" fill="#ffcd40" /><path d="M14 7.500h12.400Q24 3 20 1.300L9 3z" fill="#dd4b3e" /><path d="M1.900 7L8 17.500 14 20.500 14 28A14 14 0 011.900 7z" fill="#1da05f" /><circle cx="14" cy="14" r="6.500" fill="#f5f5f5" /><circle cx="14" cy="14" r="5" fill="#4a8af5" /></svg>, "active"],
  [<svg width="28" height="26" viewBox="0 0 28 26" className="-mt-[3px]"><path d="M3 1h22l3 20v4H0v-4z" fill="#555" /><path d="M0 21h28v4H0z" fill="#ccc" /><path d="M3 1h22l1 9H2z" fill="#777" /><text x="14" y="17" textAnchor="middle" fontSize="16" fontWeight="bold" fill="#ff9a2e" fontFamily="Open Sans">S</text></svg>],
  [<JB t="WS" a="#12c9d8" b="#27d3d8" c="#1d9fe0" />],
  [<JB t="PS" a="#e0389e" b="#8a5cf0" c="#b04cf0" />],
  [<svg width="30" height="30" viewBox="0 0 30 30"><path d="M13 6c8-2 13 3 13 9s-5 12-13 12S1 22 1 17s5-10 12-11z" fill="#d4e6f2" /><circle cx="7" cy="15" r="2.500" fill="#e85a3a" /><circle cx="11" cy="10.500" r="2.300" fill="#5cb85c" /><circle cx="17" cy="10" r="2.300" fill="#f3b52c" /><circle cx="7" cy="20.500" r="2.300" fill="#3566b8" /><circle cx="12" cy="21" r="2" fill="#02060c" /><path d="M17 27L26 5" stroke="#c8742a" strokeWidth="2.500" /><path d="M24 6l3-6 3 3-3 5z" fill="#c99c5c" /></svg>],
  [<svg width="22" height="30" viewBox="0 0 22 30"><rect width="22" height="30" fill="#fff" /><path d="M2 2.500h18v4.500H2zM2 10.500h4.500v4zM9 10.500h4.500v4zM15.500 10.500H20v4zM2 17.500h4.500v4zM9 17.500h4.500v4zM15.500 17.500H20v4zM2 24h4.500v4zM9 24h4.500v4zM15.500 24H20v4z" fill="#02060c" /></svg>],
  [<span className="relative flex items-center justify-center"><span className="absolute h-[20px] w-[18px] rounded-full bg-white" /><FaSkype size={30} color="#12a5e8" className="relative" /></span>, "line"],
  [<svg width="28" height="24" viewBox="0 0 28 24" className="-mt-[2px]"><rect x=".5" y=".5" width="27" height="22" fill="#050505" stroke="#8a8a8a" /><path d="M1 1h26v2H1z" fill="#bbb" /><path d="M1 3h26q-4 8-26 12z" fill="#3a3a3a" /><text x="3" y="10" fontSize="6" fill="#ddd" fontFamily="DejaVu Sans Mono">C:\_</text></svg>],
  [<svg width="28" height="28" viewBox="0 0 28 28"><rect x="1" y="1" width="26" height="26" fill="#0a1226" stroke="#26c3f5" strokeWidth="1.600" /><text x="14" y="19.500" textAnchor="middle" fontSize="15.500" fill="#2fc9fa" fontFamily="Open Sans">Ps</text></svg>, "line"],
  [<Office t="W" c="#2b579a" />],
  [<Office t="X" c="#217346" />, "line"],
  [<svg width="28" height="28" viewBox="0 0 28 28"><path d="M10 2h13l-2 24-4 1z" fill="#e8e8e8" /><path d="M23 6l1.500 0-1 18-2 1z" fill="#c88a30" /><path d="M9 2l13 2-3 23L2 21z" fill="#7cb4c4" /><path d="M9 2l13 2-2 9Q12 12 5 15z" fill="#b5d9e2" /><path d="M9 1.500h14" stroke="#999" strokeWidth="2" strokeDasharray="1.500 1" /></svg>, "line"],
];

const Taskbar = () => (
  <div className="flex h-[49px] shrink-0 items-center bg-[#01050b] text-[13.500px] text-[#f0f0f0]">
    <div className="flex w-[60px] justify-center"><Ico s={20} v={20}><path d="M0 3l8.500-1.300v8H0zM9.500 1.500L20 0v9.700H9.500zM0 10.700h8.500v8L0 17.500zM9.500 10.700H20V20L9.500 18.700z" fill="#fff" /></Ico></div>
    <div className="flex w-[60px] justify-center"><Ico s={22} v={22}><circle cx="13.500" cy="8" r="6.700" fill="none" stroke="#fff" strokeWidth="1.400" /><path d="M9 13L1 21" stroke="#fff" strokeWidth="1.400" /></Ico></div>
    <div className="mr-[3px] flex w-[60px] justify-center"><svg width="25" height="20" fill="none" stroke="#fff" strokeWidth="1.300"><path d="M5 1h15v17H5zM3 4H1v12h2M22 4h2v12h-2" /></svg></div>
    {APPS.map(([icon, st], i) => (
      <div key={i} className={`relative flex h-[49px] w-[62px] shrink-0 items-center justify-center ${st === "active" ? "bg-[#333539]" : ""}`}>
        {icon}
        {st === "line" && <span className="absolute bottom-0 left-[6px] h-[2px] w-[51px] bg-[#76b9ed]" />}
        {st === "active" && <span className="absolute inset-x-0 bottom-0 h-[2px] bg-[#76b9ed]" />}
      </div>
    ))}
    <div className="ml-auto flex h-[49px] items-center">
      <svg width="110" height="24" viewBox="0 0 110 24" fill="none" stroke="#eee" strokeWidth="1.400" className="mr-[13px]">
        <path d="M1 16l7.500-7.500L16 16" />
        <path d="M30 8h17v10H30z" /><path d="M32 10h3.500v6H32z" fill="#fff" stroke="none" />
        <circle cx="43" cy="17" r="5.500" fill="#139a2c" stroke="none" /><path d="M43 14q3 2.500 0 5-3-2.500 0-5zM43 16v5" strokeWidth="1" />
        <path d="M62 20A14 14 0 0176 6M66 20A10 10 0 0176 10M70 20A6 6 0 0176 14" strokeWidth="1.300" /><circle cx="75" cy="19" r="1.600" fill="#fff" stroke="none" />
        <path d="M89 10h3l4-4v13l-4-4h-3z" /><path d="M99 10q1.500 2.500 0 5" /><path d="M102.500 7.500q3 5 0 10M105.500 5.500q4.500 7 0 14" stroke="#777" />
      </svg>
      <span className="w-[26px] text-[14px]">РУС</span>
      <div className="ml-[17px] w-[70px] text-center leading-[23px]"><div>11:30</div><div>27.09.2016</div></div>
      <svg width="22" height="22" className="ml-[23px]">
        <path d="M1 1h20v16h-9l-3 3v-3H1z" fill="#fff" />
        <path d="M4.500 5h13M4.500 9h13M4.500 13h8" stroke="#01050b" strokeWidth="1.300" />
        <circle cx="16" cy="16" r="5.300" fill="#01050b" /><path d="M17 12q4 3 1.500 7-4 2.500-7-1 5 .5 5.500-6z" fill="#fff" />
      </svg>
      <span className="mr-[4px] ml-[24px] h-[49px] w-px bg-[#555]" />
    </div>
  </div>
);

export default function App() {
  return (
    <div className="flex h-[1079px] w-[1919px] flex-col overflow-hidden bg-white font-['Open_Sans',sans-serif]">
      <TabStrip />
      <Toolbar />
      <Bookmarks />
      <div className="flex min-h-0 flex-1">
        <div className="w-[1903px] shrink-0 overflow-hidden">
          <SiteHeader />
          <div className="flex">
            <Schedule />
            <Sidebar />
          </div>
        </div>
        <Scrollbar />
      </div>
      <Taskbar />
    </div>
  );
}
